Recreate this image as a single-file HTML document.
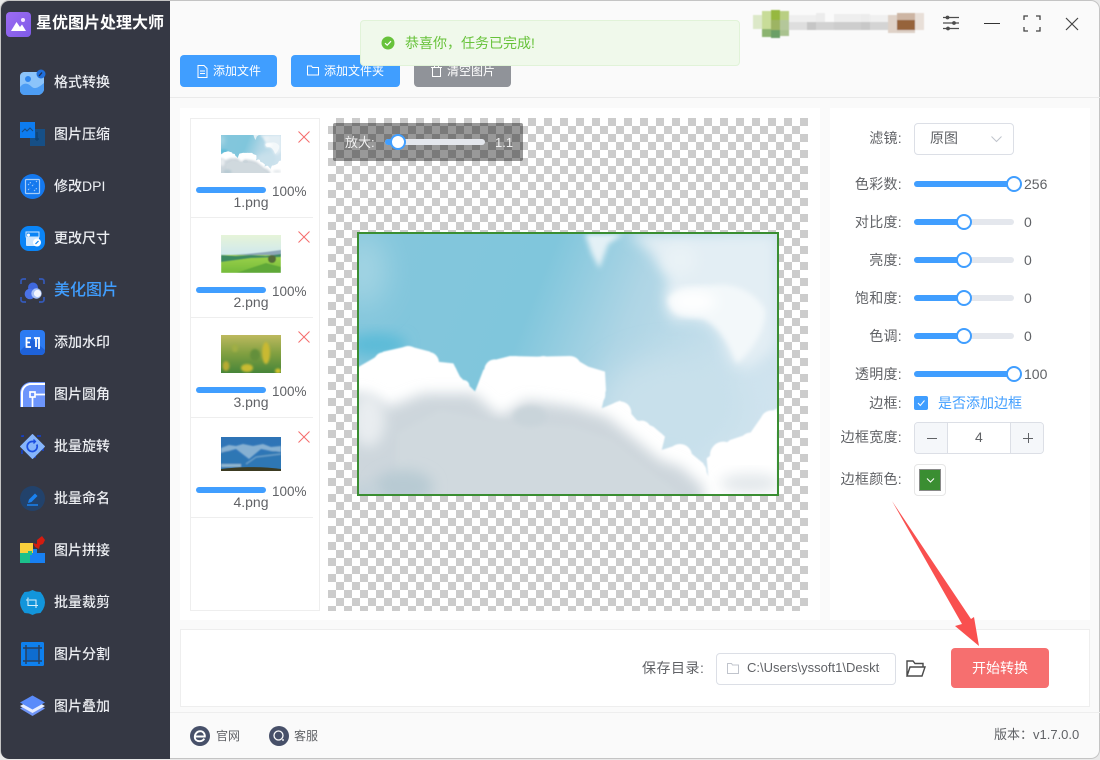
<!DOCTYPE html>
<html lang="zh-CN">
<head>
<meta charset="utf-8">
<title>星优图片处理大师</title>
<style>
*{box-sizing:border-box;margin:0;padding:0}
html,body{width:1100px;height:760px;overflow:hidden;background:#e9e9e9}
body{position:relative;font-family:"Liberation Sans","Noto Sans CJK SC",sans-serif;font-size:14px;color:#606266}
.a{position:absolute}
.t{position:absolute;white-space:nowrap;line-height:20px}
#win{position:absolute;left:0;top:0;width:1100px;height:759px;background:#fafafa;border-radius:9px;overflow:hidden;box-shadow:inset 0 0 0 1px #c4c4c4}
#side{position:absolute;left:1px;top:1px;width:169px;height:758px;background:#353844;border-radius:8px 0 0 8px}
.nav{position:absolute;left:54px;color:#eceef2;font-size:14px;line-height:20px;white-space:nowrap;font-weight:500}
.ic{position:absolute;left:20px;width:25px;height:25px;overflow:visible}
.btn{position:absolute;top:55px;height:32px;border-radius:4px;background:#409eff;color:#fff;font-size:12px;line-height:32px;white-space:nowrap}
.card{position:absolute;background:#fff}
.item-x{position:absolute;left:298px;width:12px;height:12px}
.bar{position:absolute;left:196px;width:70px;height:6px;background:#409eff;border-radius:3px}
.pct{position:absolute;left:272px;font-size:13.5px;line-height:16px;color:#606266}
.name{position:absolute;left:191px;width:120px;text-align:center;font-size:14px;line-height:16px;color:#606266}
.sep{position:absolute;left:191px;width:122px;height:1px;background:#eee}
.lab{position:absolute;right:198px;font-size:14px;line-height:20px;color:#606266;white-space:nowrap;letter-spacing:.3px}
.track{position:absolute;left:914px;width:100px;height:6px;background:#e4e7ed;border-radius:3px}
.fill{position:absolute;left:914px;height:6px;background:#409eff;border-radius:3px}
.knob{position:absolute;width:16px;height:16px;background:#fff;border:2px solid #409eff;border-radius:50%}
.val{position:absolute;left:1024px;font-size:14px;line-height:20px;color:#606266}
#checker{position:absolute;left:328px;top:118px;width:480px;height:493px;background:repeating-conic-gradient(#ccc 0 25%,#fff 0 50%) 0 0/16px 16px}
</style>
</head>
<body>
<svg width="0" height="0" style="position:absolute">
<defs>
<filter id="b8" x="-30%" y="-30%" width="160%" height="160%"><feGaussianBlur stdDeviation="8"/></filter>
<filter id="b20" x="-40%" y="-40%" width="180%" height="180%"><feGaussianBlur stdDeviation="20"/></filter>
<filter id="b45" x="-50%" y="-50%" width="200%" height="200%"><feGaussianBlur stdDeviation="45"/></filter>
<filter id="b2" x="-10%" y="-10%" width="120%" height="120%"><feGaussianBlur stdDeviation="2.5"/></filter>
<linearGradient id="skyg" x1="0" y1="0" x2="1" y2="0.25"><stop offset="0" stop-color="#84c6dc"/><stop offset=".45" stop-color="#80c6dc"/><stop offset=".68" stop-color="#aed5e5"/><stop offset="1" stop-color="#cfe3ee"/></linearGradient>
<clipPath id="skyclip"><rect x="57" y="42" width="1254" height="780"/></clipPath>
<clipPath id="cloudclip"><path d="M57 440L100 415L130 395L205 378L270 395L290 425L340 430L360 470L405 515L430 450L470 418L510 408L590 410L690 408L745 440L795 455L798 510L785 565L840 542L890 600L940 620L975 650L965 690L1020 672L1090 730L1105 770L1100 715L1170 660L1230 640L1265 590L1311 565V822H57Z"/></clipPath>
<symbol id="sky" viewBox="57 42 1254 780" preserveAspectRatio="none">
<g clip-path="url(#skyclip)">
<rect x="57" y="42" width="1254" height="780" fill="url(#skyg)"/>
<ellipse cx="70" cy="150" rx="70" ry="110" fill="#a3d4e3" filter="url(#b45)"/>
<ellipse cx="110" cy="375" rx="90" ry="35" fill="#5cbbd8" filter="url(#b20)"/>
<ellipse cx="1000" cy="560" rx="220" ry="150" fill="#c8e0eb" filter="url(#b45)"/>
<path d="M860 42C940 90 950 130 985 175C975 220 970 260 1000 305C1080 285 1130 310 1150 370C1165 420 1185 465 1240 435C1290 405 1311 380 1311 340V42Z" fill="#e3eef4" filter="url(#b20)"/>
<path d="M985 240C1010 190 1080 205 1130 195C1190 190 1250 220 1275 270C1280 330 1230 400 1190 430C1165 370 1140 320 1090 295C1040 285 1000 300 985 240Z" fill="#f3f8fa" filter="url(#b8)"/>
<ellipse cx="1060" cy="245" rx="70" ry="30" fill="#fff" filter="url(#b20)"/>
<ellipse cx="1020" cy="120" rx="50" ry="45" fill="#e9f2f6" filter="url(#b20)"/>
<path d="M735 42H850L805 72L778 145L755 100Z" fill="#e4f1f6" filter="url(#b8)"/>
<g filter="url(#b2)" fill="#fff">
<path d="M57 440L100 415L130 395L205 378L270 395L290 425L340 430L360 470L405 515L430 450L470 418L510 408L590 410L690 408L745 440L795 455L798 510L785 565L840 542L890 600L940 620L975 650L965 690L1020 672L1090 730L1105 770L1100 715L1170 660L1230 640L1265 590L1311 565V900H0V440Z"/>
<circle cx="130" cy="425" r="28"/><circle cx="205" cy="412" r="34"/><circle cx="265" cy="428" r="32"/><circle cx="325" cy="458" r="26"/><circle cx="370" cy="498" r="18"/>
<circle cx="465" cy="450" r="32"/><circle cx="525" cy="440" r="32"/><circle cx="610" cy="440" r="32"/><circle cx="690" cy="442" r="34"/><circle cx="760" cy="485" r="34"/><circle cx="770" cy="525" r="26"/>
<circle cx="840" cy="578" r="34"/><circle cx="905" cy="630" r="28"/><circle cx="948" cy="658" r="24"/><circle cx="1020" cy="708" r="36"/><circle cx="1075" cy="752" r="24"/>
<circle cx="1150" cy="705" r="40"/><circle cx="1235" cy="675" r="38"/><circle cx="1295" cy="605" r="34"/>
</g>
<g clip-path="url(#cloudclip)">
<path d="M57 520L150 560L250 520L400 520L480 590L560 540L700 560L800 590L900 670L960 720L1020 740L1090 800V900H0V520Z" fill="#cdd6dc" filter="url(#b20)"/>
<path d="M170 640L300 570L450 600L560 610L700 620L820 660L940 760L1030 830H170Z" fill="#d0d9de" filter="url(#b8)"/>
<ellipse cx="85" cy="600" rx="50" ry="80" fill="#e9edf0" filter="url(#b20)"/>
<ellipse cx="190" cy="800" rx="90" ry="50" fill="#b8cad3" filter="url(#b20)"/>
<ellipse cx="70" cy="820" rx="50" ry="30" fill="#c2d1d9" filter="url(#b20)"/>
<ellipse cx="570" cy="590" rx="50" ry="30" fill="#c9d4da" filter="url(#b8)"/>
<ellipse cx="1230" cy="790" rx="90" ry="30" fill="#e3e8eb" filter="url(#b20)"/>
</g>
</g>
</symbol>
</defs>
</svg>

<div id="win">
<div class="a" style="left:170px;top:97px;width:930px;height:1px;background:#eaeaea"></div>
<div class="a" style="left:170px;top:712px;width:930px;height:1px;background:#eeeeee"></div>

<div id="side"></div>
<svg class="a" style="left:6px;top:12px" width="25" height="25" viewBox="0 0 25 25"><defs><linearGradient id="lg" x1="0" y1="0" x2="1" y2="1"><stop offset="0" stop-color="#9d6cf2"/><stop offset="1" stop-color="#7e5be8"/></linearGradient></defs><rect width="25" height="25" rx="4" fill="url(#lg)"/><path d="M5 19L10.500 10L14 15L16 12.500L20 19Z" fill="#fff"/><circle cx="17" cy="8" r="2" fill="#f5e6ff"/></svg>
<div class="t" style="left:36px;top:14px;font-size:16px;font-weight:700;color:#fff">星优图片处理大师</div>

<svg class="ic" style="top:70px" viewBox="0 0 25 25"><path d="M4 2H18C21 2 24 5 24 8V19C24 22 21 25 18 25H5C2 25 0 23 0 20V6C0 4 2 2 4 2Z" fill="#8cc4fa"/><path d="M0 17C4 12 8 13 12 17C16 20 20 16 24 13V19C24 22 21 25 18 25H5C2 25 0 23 0 20Z" fill="#4d9df4"/><circle cx="8" cy="9" r="3" fill="#2f86ee"/><circle cx="21" cy="4" r="4.500" fill="#1f6fdb"/><path d="M19 6L22 2.500" stroke="#222c4a" stroke-width="1.300"/></svg>
<div class="nav" style="top:72px">格式转换</div>

<svg class="ic" style="top:122px" viewBox="0 0 25 25"><rect x="10" y="7" width="15" height="17" fill="#164f86"/><rect width="15" height="16" fill="#0d7cf0"/><path d="M2 10L5 7L7 9L10 6L13 9" stroke="#1b4b80" fill="none"/><path d="M17 10V19M15 17H19" stroke="#0e3f6e" stroke-width="1.200"/></svg>
<div class="nav" style="top:124px">图片压缩</div>

<svg class="ic" style="top:174px" viewBox="0 0 25 25"><circle cx="12.500" cy="12.500" r="12.500" fill="#1478ee"/><rect x="5.500" y="5.500" width="14" height="14" rx="1" fill="none" stroke="#a7cdf7" stroke-width="1.200"/><path d="M8 16L10 14M12 12L14 10M16 8L17 7M8 11L11 8M14 17L17 14" stroke="#a7cdf7" stroke-dasharray="1.500 1"/></svg>
<div class="nav" style="top:176px">修改DPI</div>

<svg class="ic" style="top:226px" viewBox="0 0 25 25"><rect width="25" height="25" rx="9" fill="#0a84f6"/><rect x="6" y="6" width="13" height="14" rx="1" fill="#cfe6fd"/><rect x="6" y="6" width="13" height="5" fill="#0a84f6" stroke="#cfe6fd" stroke-width="1"/><circle cx="8.500" cy="9" r="1.500" fill="#fff"/><circle cx="17" cy="16.500" r="4" fill="#fff"/><path d="M15.500 18L18.500 15" stroke="#0a84f6" stroke-width="1.200"/></svg>
<div class="nav" style="top:228px">更改尺寸</div>

<svg class="ic" style="top:278px" viewBox="0 0 25 25"><path d="M1 6V3C1 2 2 1 3 1H6M19 1H22C23 1 24 2 24 3V6M24 19V22C24 23 23 24 22 24H19M6 24H3C2 24 1 23 1 22V19" stroke="#3459b8" stroke-width="1.700" fill="none"/><circle cx="13" cy="9.500" r="5" fill="#3f68dd"/><circle cx="10" cy="16" r="5.300" fill="#4a72e8"/><circle cx="16.500" cy="15.500" r="5.200" fill="#a9c2f7"/><circle cx="17.500" cy="15.500" r="3.600" fill="#f2f5ff"/></svg>
<div class="t" style="left:54px;top:281px;font-size:16px;font-weight:500;color:#409eff">美化图片</div>

<svg class="ic" style="top:330px" viewBox="0 0 25 25"><rect width="25" height="25" rx="4" fill="#2c7bf2"/><path d="M0 21L12 9L25 20V21C25 23 23 25 21 25H4C2 25 0 23 0 21Z" fill="#1e62da"/><path d="M11 8H6.500V17H11M6.500 12.500H10" stroke="#fff" stroke-width="1.800" fill="none"/><path d="M14 8H19V19M16 8V17" stroke="#fff" stroke-width="1.800" fill="none"/></svg>
<div class="nav" style="top:332px">添加水印</div>

<svg class="ic" style="top:382px" viewBox="0 0 25 25"><path d="M0 25V11C0 5 5 0 11 0H25V25Z" fill="#6d95fb"/><path d="M2 25V11C2 6 6 2 11 2H25" stroke="#fff" stroke-width="2" fill="none"/><rect x="10" y="10" width="5" height="5" fill="none" stroke="#fff" stroke-width="1.700"/><path d="M15 12.500H25M12.500 15V25" stroke="#fff" stroke-width="1.700"/></svg>
<div class="nav" style="top:384px">图片圆角</div>

<svg class="ic" style="top:434px" viewBox="0 0 25 25"><rect x="2" y="2" width="21" height="21" fill="none" stroke="#1140d8" stroke-width="1.500" stroke-dasharray="4 13" stroke-dashoffset="2"/><path d="M12.500 0.500L24.500 12.500L12.500 24.500L0.500 12.500Z" fill="#86b5fb" stroke="#86b5fb" stroke-linejoin="round" stroke-width="1"/><path d="M16.800 10.500A5 5 0 1 1 12 7.500H15" stroke="#1c4fe0" stroke-width="1.700" fill="none"/><path d="M13.500 5.500L15.500 7.500L13.500 9.500" stroke="#1c4fe0" stroke-width="1.300" fill="none"/></svg>
<div class="nav" style="top:436px">批量旋转</div>

<svg class="ic" style="top:486px" viewBox="0 0 25 25"><circle cx="12.500" cy="12.500" r="12.500" fill="#22426b"/><path d="M8 17L9 13.500L15 7.500L17.500 10L11.500 16Z" fill="#1a82f0"/><path d="M7 19H18" stroke="#1a82f0" stroke-width="1.500"/></svg>
<div class="nav" style="top:488px">批量命名</div>

<svg class="ic" style="top:538px" viewBox="0 0 25 25"><rect x="0" y="5" width="13" height="10" fill="#f9cf3c"/><rect x="0" y="15" width="10" height="10" fill="#1cc08b"/><rect x="10" y="15" width="15" height="10" fill="#1880f2"/><rect x="13" y="11" width="4" height="5" fill="#1880f2"/><rect x="8" y="13" width="4" height="4" fill="#1cc08b"/><path d="M13 5L17 6L17 2L22 -2L25 2L23 6L20 7L19 11L15 9Z" fill="#d41c10"/></svg>
<div class="nav" style="top:540px">图片拼接</div>

<svg class="ic" style="top:590px" viewBox="0 0 25 25"><path d="M12.500 0L16 1.500L20.500 2L23 5.500L24.500 9L25 12.500L24.500 16L23 19.500L20.500 23L16 23.500L12.500 25L9 23.500L4.500 23L2 19.500L.5 16L0 12.500L.5 9L2 5.500L4.500 2L9 1.500Z" fill="#1295db"/><path d="M8 7.500V15.500H16M16 18V10H9M6 10H8M16 15.500H18" stroke="#d7effa" stroke-width="1.100" fill="none"/></svg>
<div class="nav" style="top:592px">批量裁剪</div>

<svg class="ic" style="top:642px" viewBox="0 0 25 25"><rect x="1" width="23" height="24" rx="1.500" fill="#0e80ee"/><rect x="6" y="6" width="13" height="13" fill="#0e6dd0"/><path d="M6 3V22M19 3V22M3 6H22M3 19H22" stroke="#28405f" stroke-width="1.500"/></svg>
<div class="nav" style="top:644px">图片分割</div>

<svg class="ic" style="top:694px" viewBox="0 0 25 25"><path d="M0 14.500L12.500 8L25 14.500L12.500 22Z" fill="#6f94f6"/><path d="M0 12L12.500 19L25 12L12.500 5Z" fill="#e6edff"/><path d="M0 8.500L12.500 1.500L25 8.500L12.500 15.500Z" fill="#5a8bfa"/></svg>
<div class="nav" style="top:696px">图片叠加</div>

<!-- window controls -->
<svg class="a" style="left:942px;top:14px" width="18" height="18" viewBox="0 0 18 18" fill="none" stroke="#4d4d4d" stroke-width="1.200"><path d="M1 3.500H17M1 9H17M1 14.500H17"/><circle cx="5.500" cy="3.500" r="1.300" fill="#4d4d4d"/><circle cx="12" cy="9" r="1.300" fill="#4d4d4d"/><circle cx="6" cy="14.500" r="1.300" fill="#4d4d4d"/></svg>
<div class="a" style="left:984px;top:23px;width:16px;height:1px;background:#333"></div>
<svg class="a" style="left:1023px;top:15px" width="18" height="17" viewBox="0 0 18 17" fill="none" stroke="#444" stroke-width="1.300"><path d="M1 5V1H5M13 1H17V5M17 12V16H13M5 16H1V12"/></svg>
<svg class="a" style="left:1065px;top:17px" width="14" height="14" viewBox="0 0 14 14" fill="none" stroke="#444" stroke-width="1.200"><path d="M1 1L13 13M13 1L1 13"/></svg>

<!-- pixelated user -->
<svg class="a" style="left:0;top:0" width="1100" height="45">
<defs><filter id="soft"><feGaussianBlur stdDeviation=".6"/></filter></defs>
<g filter="url(#soft)">
<rect x="753" y="15" width="9" height="14" fill="#dce8c8"/>
<rect x="762" y="11" width="9" height="18" fill="#c8dc98"/>
<rect x="762" y="29" width="9" height="8" fill="#8bb36f"/>
<rect x="771" y="10" width="9" height="10" fill="#96b83f"/>
<rect x="771" y="20" width="9" height="10" fill="#9db463"/>
<rect x="771" y="30" width="9" height="8" fill="#6a9f66"/>
<rect x="780" y="11" width="9" height="9" fill="#b9cf83"/>
<rect x="780" y="20" width="9" height="10" fill="#b4c79a"/>
<rect x="780" y="30" width="9" height="6" fill="#a9c28f"/>
<rect x="789" y="15" width="27" height="7" fill="#efefef"/>
<rect x="789" y="22" width="18" height="8" fill="#dedede"/>
<rect x="807" y="22" width="9" height="8" fill="#c6c6c6"/>
<rect x="816" y="13" width="9" height="9" fill="#ececec"/>
<rect x="816" y="22" width="18" height="8" fill="#d2d2d2"/>
<rect x="834" y="14" width="27" height="8" fill="#eeeeee"/>
<rect x="834" y="22" width="27" height="8" fill="#cdcdcd"/>
<rect x="861" y="14" width="9" height="8" fill="#ececec"/>
<rect x="861" y="22" width="9" height="8" fill="#c8c8c8"/>
<rect x="870" y="15" width="18" height="7" fill="#f0f0f0"/>
<rect x="870" y="22" width="18" height="8" fill="#d4d4d4"/>
<rect x="888" y="15" width="9" height="18" fill="#dfd2c8"/>
<rect x="897" y="13" width="18" height="7" fill="#cdb5a3"/>
<rect x="897" y="20" width="18" height="10" fill="#96633b"/>
<rect x="897" y="30" width="18" height="3" fill="#dccfc5"/>
<rect x="915" y="13" width="9" height="17" fill="#e8dfd8"/>
</g>
</svg>

<!-- top buttons -->
<div class="btn" style="left:180px;width:97px;padding-left:33px">添加文件
<svg class="a" style="left:17px;top:10px" width="11" height="13" viewBox="0 0 11 13" fill="none" stroke="#fff" stroke-width="1"><path d="M1 .5H7L10 3.500V12.500H1Z"/><path d="M3 6H8M3 8.500H8"/></svg></div>
<div class="btn" style="left:291px;width:109px;padding-left:33px">添加文件夹
<svg class="a" style="left:16px;top:10px" width="12" height="11" viewBox="0 0 12 11" fill="none" stroke="#fff" stroke-width="1"><path d="M.5 1H4.500L5.500 2.500H11.500V10H.5Z"/></svg></div>
<div class="btn" style="left:414px;width:97px;padding-left:33px;background:#909399">清空图片
<svg class="a" style="left:17px;top:10px" width="11" height="12" viewBox="0 0 11 12" fill="none" stroke="#fff" stroke-width="1"><path d="M0 2.500H11M3.500 2.500V.5H7.500V2.500M1.500 2.500V11.500H9.500V2.500"/></svg></div>

<!-- notification -->
<div class="a" style="left:360px;top:20px;width:380px;height:46px;background:#f0f9eb;border:1px solid #e1f3d8;border-radius:4px"></div>
<svg class="a" style="left:381px;top:36px" width="14" height="14" viewBox="0 0 14 14"><circle cx="7" cy="7" r="6.500" fill="#67c23a"/><path d="M4 7.200L6.200 9.200L10 5.200" stroke="#fff" stroke-width="1.200" fill="none"/></svg>
<div class="t" style="left:405px;top:33px;font-size:14px;color:#67c23a">恭喜你，任务已完成!</div>

<!-- main card -->
<div class="card" style="left:180px;top:108px;width:640px;height:512px"></div>
<div class="card" style="left:830px;top:108px;width:260px;height:512px"></div>

<!-- file list -->
<div class="a" style="left:190px;top:118px;width:130px;height:493px;border:1px solid #eee;background:#fff"></div>

<svg class="a" style="left:221px;top:135px" width="60" height="38"><use href="#sky" width="60" height="38"/></svg>
<svg class="item-x" style="top:131px" viewBox="0 0 12 12" fill="none" stroke="#f56c6c" stroke-width="1"><path d="M.5 .5L11.500 11.500M11.500 .5L.5 11.500"/></svg>
<div class="bar" style="top:187px"></div><div class="pct" style="top:184px">100%</div><div class="name" style="top:194px">1.png</div>
<div class="sep" style="top:217px"></div>

<svg class="a" style="left:221px;top:235px" width="60" height="38" viewBox="0 0 60 38" preserveAspectRatio="none">
<defs><linearGradient id="t2s" x1="0" y1="0" x2="0" y2="1"><stop offset="0" stop-color="#e6f4d8"/><stop offset="1" stop-color="#cfe8ee"/></linearGradient><linearGradient id="t2g" x1="0" y1="0" x2="0" y2="1"><stop offset="0" stop-color="#9ed24a"/><stop offset="1" stop-color="#74bb3b"/></linearGradient><filter id="t2b"><feGaussianBlur stdDeviation=".5"/></filter></defs>
<rect width="60" height="20" fill="url(#t2s)"/>
<g filter="url(#t2b)">
<path d="M10 20L25 19L45 17L60 15V24H10Z" fill="#8da6b8"/>
<rect y="20" width="60" height="18" fill="url(#t2g)"/>
<path d="M0 20L15 21L30 20L45 21L60 19V22L30 23L15 25L0 27Z" fill="#3d8a63"/>
<path d="M15 38L45 28L60 32V38Z" fill="#5fa838"/>
<ellipse cx="51" cy="24" rx="4" ry="4" fill="#566b3a"/>
</g>
</svg>
<svg class="item-x" style="top:231px" viewBox="0 0 12 12" fill="none" stroke="#f56c6c" stroke-width="1"><path d="M.5 .5L11.500 11.500M11.500 .5L.5 11.500"/></svg>
<div class="bar" style="top:287px"></div><div class="pct" style="top:284px">100%</div><div class="name" style="top:294px">2.png</div>
<div class="sep" style="top:317px"></div>

<svg class="a" style="left:221px;top:335px" width="60" height="38" viewBox="0 0 60 38">
<defs><linearGradient id="t3" x1="0" y1="0" x2="0" y2="1"><stop offset="0" stop-color="#bdb95e"/><stop offset=".5" stop-color="#7f9f40"/><stop offset="1" stop-color="#46853a"/></linearGradient><filter id="t3b"><feGaussianBlur stdDeviation="1"/></filter></defs>
<rect width="60" height="38" fill="url(#t3)"/>
<g filter="url(#t3b)"><ellipse cx="45" cy="18" rx="4" ry="11" fill="#c9b933"/><ellipse cx="26" cy="33" rx="6" ry="4" fill="#c9bb30"/><ellipse cx="5" cy="31" rx="3.500" ry="5" fill="#b7ab30"/><ellipse cx="57" cy="36" rx="3" ry="2.500" fill="#d6c42c"/><ellipse cx="14" cy="13" rx="3" ry="4" fill="#a0ae44"/><ellipse cx="34" cy="20" rx="5" ry="6" fill="#648f3b"/></g>
</svg>
<svg class="item-x" style="top:331px" viewBox="0 0 12 12" fill="none" stroke="#f56c6c" stroke-width="1"><path d="M.5 .5L11.500 11.500M11.500 .5L.5 11.500"/></svg>
<div class="bar" style="top:387px"></div><div class="pct" style="top:384px">100%</div><div class="name" style="top:394px">3.png</div>
<div class="sep" style="top:417px"></div>

<svg class="a" style="left:221px;top:437px" width="60" height="34" viewBox="0 0 60 34">
<defs><linearGradient id="t4" x1="0" y1="0" x2="0" y2="1"><stop offset="0" stop-color="#2f74b6"/><stop offset="1" stop-color="#2d77b9"/></linearGradient><filter id="t4b"><feGaussianBlur stdDeviation=".7"/></filter></defs>
<rect width="60" height="34" fill="url(#t4)"/>
<g filter="url(#t4b)">
<path d="M0 11L8 8L15 9L22 7L32 9L42 7L50 10L60 9V16L40 12L28 22L15 12L0 16Z" fill="#86b0d2"/>
<path d="M0 16C12 10 22 20 28 24C35 18 48 12 60 15V34H0Z" fill="#2f77b4"/>
<path d="M25 27L35 20L60 17" stroke="#6ea3ca" stroke-width="1.200" fill="none"/>
<path d="M0 27H20V30H0Z" fill="#8fb6cf"/>
</g>
<path d="M0 34V32C15 30 40 29 60 32V34Z" fill="#3c3b22"/>
</svg>
<svg class="item-x" style="top:431px" viewBox="0 0 12 12" fill="none" stroke="#f56c6c" stroke-width="1"><path d="M.5 .5L11.500 11.500M11.500 .5L.5 11.500"/></svg>
<div class="bar" style="top:487px"></div><div class="pct" style="top:484px">100%</div><div class="name" style="top:494px">4.png</div>
<div class="sep" style="top:517px"></div>

<!-- preview -->
<div id="checker"></div>
<div class="a" style="left:357px;top:232px;width:422px;height:264px;border:2px solid #3a8e32;background:#fff"></div>
<svg class="a" style="left:359px;top:234px" width="418" height="260"><use href="#sky" width="418" height="260"/></svg>

<!-- zoom overlay -->
<div class="a" style="left:333px;top:123px;width:190px;height:38px;background:rgba(0,0,0,.4);border-radius:2px"></div>
<div class="t" style="left:345px;top:133px;font-size:13px;color:#f0f0f0">放大:</div>
<div class="a" style="left:385px;top:139px;width:100px;height:6px;background:#e4e7ed;border-radius:3px"></div>
<div class="a" style="left:385px;top:139px;width:13px;height:6px;background:#409eff;border-radius:3px"></div>
<div class="knob" style="left:390px;top:134px"></div>
<div class="t" style="left:495px;top:133px;font-size:13px;color:#f0f0f0">1.1</div>

<!-- right panel -->
<div class="lab" style="top:128px">滤镜:</div>
<div class="a" style="left:914px;top:123px;width:100px;height:32px;border:1px solid #dcdfe6;border-radius:4px;background:#fff"></div>
<div class="t" style="left:930px;top:128px;font-size:14px;color:#606266">原图</div>
<svg class="a" style="left:991px;top:135px" width="11" height="8" viewBox="0 0 11 8" fill="none" stroke="#c0c4cc" stroke-width="1"><path d="M.5 1.500L5.500 6.500L10.500 1.500"/></svg>

<div class="lab" style="top:174px">色彩数:</div>
<div class="track" style="top:181px"></div><div class="fill" style="top:181px;width:100px"></div><div class="knob" style="left:1006px;top:176px"></div>
<div class="val" style="top:174px">256</div>

<div class="lab" style="top:212px">对比度:</div>
<div class="track" style="top:219px"></div><div class="fill" style="top:219px;width:50px"></div><div class="knob" style="left:956px;top:214px"></div>
<div class="val" style="top:212px">0</div>

<div class="lab" style="top:250px">亮度:</div>
<div class="track" style="top:257px"></div><div class="fill" style="top:257px;width:50px"></div><div class="knob" style="left:956px;top:252px"></div>
<div class="val" style="top:250px">0</div>

<div class="lab" style="top:288px">饱和度:</div>
<div class="track" style="top:295px"></div><div class="fill" style="top:295px;width:50px"></div><div class="knob" style="left:956px;top:290px"></div>
<div class="val" style="top:288px">0</div>

<div class="lab" style="top:326px">色调:</div>
<div class="track" style="top:333px"></div><div class="fill" style="top:333px;width:50px"></div><div class="knob" style="left:956px;top:328px"></div>
<div class="val" style="top:326px">0</div>

<div class="lab" style="top:364px">透明度:</div>
<div class="track" style="top:371px"></div><div class="fill" style="top:371px;width:100px"></div><div class="knob" style="left:1006px;top:366px"></div>
<div class="val" style="top:364px">100</div>

<div class="lab" style="top:393px">边框:</div>
<div class="a" style="left:914px;top:396px;width:14px;height:14px;background:#409eff;border-radius:2px"></div>
<svg class="a" style="left:914px;top:396px" width="14" height="14" viewBox="0 0 14 14" fill="none" stroke="#fff" stroke-width="1"><path d="M4 7L6.300 9.500L10.500 4.500"/></svg>
<div class="t" style="left:938px;top:393px;font-size:14px;color:#409eff">是否添加边框</div>

<div class="lab" style="top:427px">边框宽度:</div>
<div class="a" style="left:914px;top:422px;width:130px;height:32px;border:1px solid #dcdfe6;border-radius:4px;background:#fff;overflow:hidden">
<div class="a" style="left:0;top:0;width:33px;height:30px;background:#f5f7fa;border-right:1px solid #dcdfe6"></div>
<div class="a" style="right:0;top:0;width:33px;height:30px;background:#f5f7fa;border-left:1px solid #dcdfe6"></div>
</div>
<div class="a" style="left:927px;top:438px;width:10px;height:1px;background:#606266"></div>
<div class="a" style="left:1023px;top:438px;width:10px;height:1px;background:#606266"></div>
<div class="a" style="left:1028px;top:433px;width:1px;height:10px;background:#606266"></div>
<div class="t" style="left:975px;top:427px;font-size:14px;color:#606266">4</div>

<div class="lab" style="top:469px">边框颜色:</div>
<div class="a" style="left:914px;top:464px;width:32px;height:32px;border:1px solid #e6e6e6;border-radius:4px;background:#fff"></div>
<div class="a" style="left:919px;top:469px;width:22px;height:22px;background:#3a8e32;border:1px solid #8a8a8a"></div>
<svg class="a" style="left:926px;top:477px" width="9" height="7" viewBox="0 0 9 7" fill="none" stroke="#fff" stroke-width="1"><path d="M1 1.500L4.500 5L8 1.500"/></svg>

<!-- bottom -->
<div class="a" style="left:180px;top:629px;width:910px;height:78px;background:#fff;border:1px solid #eee"></div>
<div class="t" style="left:642px;top:658px;font-size:14px;color:#606266;letter-spacing:.5px">保存目录:</div>
<div class="a" style="left:716px;top:653px;width:180px;height:32px;background:#fff;border:1px solid #dcdfe6;border-radius:4px"></div>
<svg class="a" style="left:727px;top:663px" width="12" height="11" viewBox="0 0 12 11" fill="none" stroke="#c0c4cc" stroke-width="1"><path d="M.5 .5H4.500L5.500 2H11.500V10.500H.5Z"/></svg>
<div class="t" style="left:747px;top:658px;width:133px;overflow:hidden;font-size:13px;color:#606266">C:\Users\yssoft1\Desktop</div>
<svg class="a" style="left:905px;top:659px" width="21" height="19" viewBox="0 0 21 19" fill="none" stroke="#4a4a4a" stroke-width="1.400"><path d="M2 17V2H8L10 4.500H18V8M2 17H17L20 8H5L2 17Z"/></svg>
<div class="a" style="left:951px;top:648px;width:98px;height:40px;background:#f66f6f;border-radius:4px;color:#fff;text-align:center;line-height:40px;font-size:14px">开始转换</div>

<svg class="a" style="left:0;top:0;pointer-events:none" width="1100" height="760"><polygon points="892,501 971,619 974,617 979,646 955,626 962,624" fill="#f9504f"/></svg>

<!-- footer -->
<svg class="a" style="left:190px;top:726px" width="20" height="20" viewBox="0 0 20 20"><circle cx="10" cy="10" r="10" fill="#475069"/><path d="M5.500 10.500H14.800C15 7.500 13 5.200 10.300 5.200C7 5.200 4.800 8 4.800 11C4.800 13.600 6.800 15.200 9.500 15.200C11.600 15.200 13.300 14.200 14.300 12.600" fill="none" stroke="#fff" stroke-width="1.900"/></svg>
<div class="t" style="left:216px;top:726px;font-size:12px;color:#606266">官网</div>
<svg class="a" style="left:269px;top:726px" width="20" height="20" viewBox="0 0 20 20"><circle cx="10" cy="10" r="10" fill="#475069"/><circle cx="9.500" cy="9.500" r="4.500" fill="none" stroke="#fff" stroke-width="1.300"/><path d="M13 14H15" stroke="#fff" stroke-width="1.300"/></svg>
<div class="t" style="left:294px;top:726px;font-size:12px;color:#606266">客服</div>
<div class="t" style="left:994px;top:725px;font-size:13px;color:#606266">版本：v1.7.0.0</div>

</div>
</body>
</html>
